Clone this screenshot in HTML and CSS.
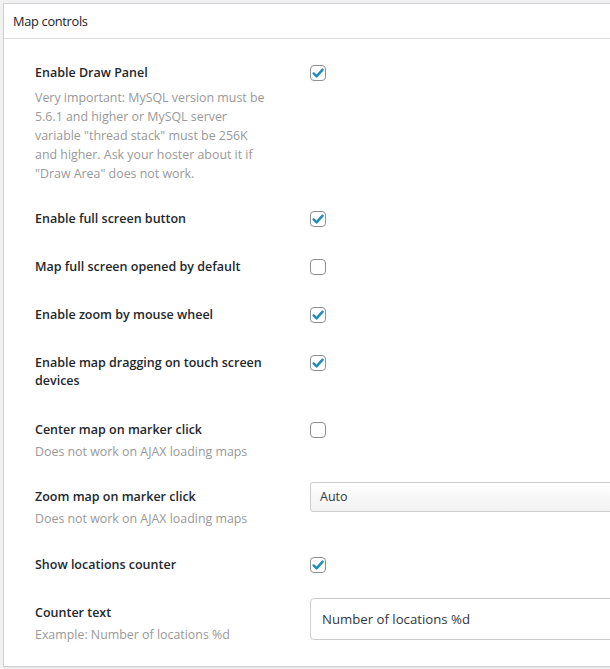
FILE: index.html
```html
<!DOCTYPE html>
<html>
<head>
<meta charset="utf-8">
<link rel="stylesheet" href="styles.css">
</head>
<body>
<div class="panel">
  <div class="panel-head">Map controls</div>
  <div class="panel-body">
    <div class="row">
      <div class="label-col">
        <div class="label">Enable Draw Panel</div>
        <div class="desc desc-long">Very important: MySQL version must be 5.6.1 and higher or MySQL server variable "thread stack" must be 256K and higher. Ask your hoster about it if "Draw Area" does not work.</div>
      </div>
      <div class="ctrl"><span class="cb on"><svg viewBox="0 0 16 16"><path d="M3.6 8.4 L6.6 11.4 L12.6 4.6" /></svg></span></div>
    </div>
    <div class="row">
      <div class="label-col"><div class="label">Enable full screen button</div></div>
      <div class="ctrl"><span class="cb on"><svg viewBox="0 0 16 16"><path d="M3.6 8.4 L6.6 11.4 L12.6 4.6" /></svg></span></div>
    </div>
    <div class="row">
      <div class="label-col"><div class="label">Map full screen opened by default</div></div>
      <div class="ctrl"><span class="cb"></span></div>
    </div>
    <div class="row">
      <div class="label-col"><div class="label">Enable zoom by mouse wheel</div></div>
      <div class="ctrl"><span class="cb on"><svg viewBox="0 0 16 16"><path d="M3.6 8.4 L6.6 11.4 L12.6 4.6" /></svg></span></div>
    </div>
    <div class="row row-two">
      <div class="label-col"><div class="label">Enable map dragging on touch screen devices</div></div>
      <div class="ctrl"><span class="cb on"><svg viewBox="0 0 16 16"><path d="M3.6 8.4 L6.6 11.4 L12.6 4.6" /></svg></span></div>
    </div>
    <div class="row">
      <div class="label-col">
        <div class="label">Center map on marker click</div>
        <div class="desc">Does not work on AJAX loading maps</div>
      </div>
      <div class="ctrl"><span class="cb"></span></div>
    </div>
    <div class="row row-select">
      <div class="label-col">
        <div class="label">Zoom map on marker click</div>
        <div class="desc">Does not work on AJAX loading maps</div>
      </div>
      <div class="ctrl"><div class="select">Auto</div></div>
    </div>
    <div class="row">
      <div class="label-col"><div class="label">Show locations counter</div></div>
      <div class="ctrl"><span class="cb on"><svg viewBox="0 0 16 16"><path d="M3.6 8.4 L6.6 11.4 L12.6 4.6" /></svg></span></div>
    </div>
    <div class="row">
      <div class="label-col">
        <div class="label">Counter text</div>
        <div class="desc">Example: Number of locations %d</div>
      </div>
      <div class="ctrl"><div class="input">Number of locations %d</div></div>
    </div>
  </div>
</div>
</body>
</html>
```
FILE: styles.css
```css
html, body {
  margin: 0;
  padding: 0;
  background: #f1f1f1;
  overflow: hidden;
}
body {
  font-family: "Open Sans", "Noto Sans", sans-serif;
  color: #23282d;
  width: 610px;
  height: 669px;
}
.panel {
  margin: 3px 0 0 3px;
  width: 700px;
  background: #fff;
  border: 1px solid #ccd0d4;
  box-shadow: 0 1px 1px rgba(0,0,0,0.04);
}
.panel-head {
  height: 35px;
  line-height: 34px;
  padding-left: 9px;
  font-size: 12.8px;
  font-weight: 500;
  letter-spacing: -0.3px;
  color: #1d2327;
  border-bottom: 1px solid #dcdcde;
  box-sizing: border-box;
}
.panel-body {
  padding: 10px 0 10px 31px;
}
.row {
  display: grid;
  grid-template-columns: 275px 1fr;
  padding: 15px 0;
  align-items: start;
}
.row-two {
  padding-bottom: 16px;
}
.row-select {
  padding-bottom: 16px;
}
.label {
  font-size: 12.5px;
  font-weight: 600;
  line-height: 18px;
  color: #23282d;
  width: 240px;
}
.desc {
  font-size: 12.4px;
  line-height: 19px;
  color: #999;
  margin-top: 3px;
  margin-bottom: -3px;
  width: 240px;
}
.desc-long {
  margin-top: 6px;
  width: 233px;
}
.ctrl {
  display: flex;
}
.cb {
  width: 16px;
  height: 16px;
  box-sizing: border-box;
  border: 1px solid #8c8f94;
  border-radius: 4px;
  margin-top: 1px;
  background: #fff;
  display: flex;
  align-items: center;
  justify-content: center;
}
.cb svg {
  width: 16px;
  height: 16px;
  flex: none;
}
.cb path {
  fill: none;
  stroke: #1e8cbe;
  stroke-width: 2.4;
  stroke-linecap: round;
  stroke-linejoin: round;
}
.select {
  margin-top: -6px;
  width: 400px;
  height: 30px;
  box-sizing: border-box;
  border: 1px solid #ccc;
  border-radius: 3px;
  background: linear-gradient(#fff, #f2f2f2);
  font-size: 12.5px;
  line-height: 28px;
  padding-left: 9px;
  color: #32373c;
}
.input {
  margin-top: -6px;
  width: 400px;
  height: 42px;
  box-sizing: border-box;
  border: 1px solid #ccc;
  border-radius: 4px;
  background: #fff;
  font-size: 13.2px;
  line-height: 40px;
  padding-left: 11px;
  color: #32373c;
}
```
